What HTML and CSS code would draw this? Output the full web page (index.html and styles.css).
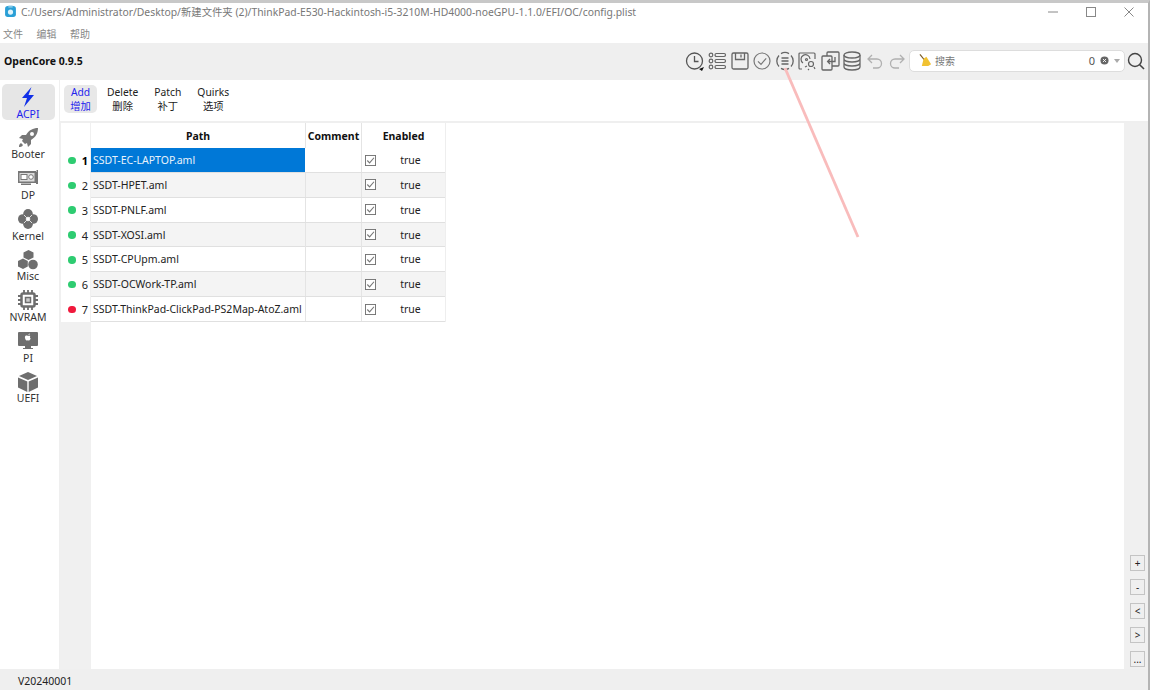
FILE: index.html
```html
<!DOCTYPE html>
<html lang="zh">
<head>
<meta charset="utf-8">
<title>OpenCore Configurator</title>
<link rel="stylesheet" href="styles.css">
</head>
<body>
<svg class="defs" width="0" height="0" aria-hidden="true">
  <symbol id="check" viewBox="0 0 12 12">
    <rect x="0.5" y="0.5" width="11" height="11" fill="#fff" stroke="#707070"/>
    <path d="M2.5 6l2.5 2.6L9.8 3" fill="none" stroke="#777" stroke-width="1.2"/>
  </symbol>
</svg>
<div class="window">
  <header class="titlebar">
    <svg class="appicon" viewBox="0 0 12 12"><rect x="1" y="1" width="10" height="10" rx="2.5" fill="#2a9fd6"/><circle cx="6" cy="6.5" r="2.4" fill="#dff3fb"/><rect x="4" y="0.5" width="4" height="2" fill="#7fc7e6"/></svg>
    <span class="path">C:/Users/Administrator/Desktop/新建文件夹 (2)/ThinkPad-E530-Hackintosh-i5-3210M-HD4000-noeGPU-1.1.0/EFI/OC/config.plist</span>
    <div class="winctl">
      <svg viewBox="0 0 12 12"><path d="M1 6h10" stroke="#888" fill="none"/></svg>
      <svg viewBox="0 0 12 12"><rect x="1.5" y="1.5" width="9" height="9" stroke="#888" fill="none"/></svg>
      <svg viewBox="0 0 12 12"><path d="M1.5 1.5l9 9M10.5 1.5l-9 9" stroke="#888" fill="none"/></svg>
    </div>
  </header>
  <nav class="menubar"><span>文件</span><span>编辑</span><span>帮助</span></nav>
  <div class="toolbar">
    <strong class="brand">OpenCore 0.9.5</strong>
    <div class="tools">
      <svg viewBox="0 0 20 20"><circle cx="9.5" cy="10" r="8" fill="none" stroke="#555" stroke-width="1.3"/><path d="M9.5 5v5.5h4" fill="none" stroke="#555" stroke-width="1.3"/><path d="M14 18l5-2-2 4z" fill="#111"/></svg>
      <svg viewBox="0 0 20 20"><g fill="none" stroke="#666" stroke-width="1.2"><circle cx="4" cy="4" r="1.8"/><circle cx="4" cy="10" r="1.8"/><circle cx="4" cy="16" r="1.8"/><rect x="8" y="2.5" width="10.5" height="3" rx="1.4"/><rect x="8" y="8.5" width="10.5" height="3" rx="1.4"/><rect x="8" y="14.5" width="10.5" height="3" rx="1.4"/></g></svg>
      <svg viewBox="0 0 20 20"><g fill="none" stroke="#666" stroke-width="1.3"><rect x="2" y="2" width="16" height="16" rx="1.5"/><path d="M5.5 2v6.5h9V2"/><path d="M11 3.5v3"/></g></svg>
      <svg viewBox="0 0 20 20"><g fill="none" stroke="#777" stroke-width="1.2"><circle cx="10" cy="10" r="8"/><path d="M6 10.3l3 3 5.2-6"/></g></svg>
      <svg viewBox="0 0 20 20"><g fill="none" stroke="#666" stroke-width="1.3"><path d="M4 4.5A8 8 0 0 0 4 15.5M16 4.5A8 8 0 0 1 16 15.5M6 2.6A8 8 0 0 1 14 2.6M6 17.4A8 8 0 0 0 14 17.4"/><path d="M6.5 7h7M6.5 10h7M6.5 13h7"/></g></svg>
      <svg viewBox="0 0 20 20"><g fill="none" stroke="#666" stroke-width="1.2"><path d="M5 18H3a1 1 0 0 1-1-1V3a1 1 0 0 1 1-1h14a1 1 0 0 1 1 1v5"/><path d="M6 12a4.5 4.5 0 1 1 7-4"/><circle cx="9.5" cy="8.5" r="1"/><circle cx="14" cy="13" r="2.5"/><path d="M8 16l2-1M17 16l1 2M12 18l-1 1"/></g></svg>
      <svg viewBox="0 0 20 20"><g fill="none" stroke="#666" stroke-width="1.3"><rect x="2" y="5" width="10" height="14" rx="1"/><path d="M7 5V2a1 1 0 0 1 1-1h10a1 1 0 0 1 1 1v12a1 1 0 0 1-1 1h-6"/><path d="M15 6v4.500H8M10 8l-2.400 2.500 2.400 2.500"/></g></svg>
      <svg viewBox="0 0 20 20"><g fill="none" stroke="#666" stroke-width="1.3"><ellipse cx="10" cy="4" rx="8" ry="3"/><path d="M2 4v12c0 1.700 3.600 3 8 3s8-1.300 8-3V4M2 8c0 1.700 3.600 3 8 3s8-1.300 8-3M2 12c0 1.700 3.600 3 8 3s8-1.300 8-3"/></g></svg>
      <svg viewBox="0 0 20 20"><path d="M7 4L3 8l4 4M3 8h9a4.500 4.500 0 0 1 0 9H8" fill="none" stroke="#b0b0b0" stroke-width="1.300"/></svg>
      <svg viewBox="0 0 20 20"><path d="M13 4l4 4-4 4M17 8H8a4.500 4.500 0 0 0 0 9h4" fill="none" stroke="#b0b0b0" stroke-width="1.300"/></svg>
    </div>
    <div class="search">
      <svg class="broom" viewBox="0 0 14 14"><path d="M1 0.500l5 6" stroke="#7a5a20" stroke-width="1.200"/><path d="M5 5l3-2 5 8-3 2-7 0z" fill="#f1c232"/></svg>
      <span class="search-label">搜索</span>
      <span class="count">0</span>
      <svg class="clear" viewBox="0 0 10 10"><circle cx="5" cy="5" r="4.500" fill="#666"/><path d="M3.300 3.300l3.400 3.400M6.700 3.300L3.300 6.700" stroke="#fff"/></svg>
      <span class="caret"></span>
    </div>
    <svg class="magnifier" viewBox="0 0 18 18"><circle cx="8" cy="8" r="6.500" fill="none" stroke="#444" stroke-width="1.400"/><path d="M12.700 12.700L17 17" stroke="#444" stroke-width="1.600"/></svg>
  </div>
  <div class="main">
    <aside class="sidebar">
      <a class="nav active"><svg viewBox="0 0 20 20"><path d="M13.500 0L4 11h5l-3 9 10-12h-5.500z" fill="#1130e8"/></svg><span>ACPI</span></a>
      <a class="nav"><svg viewBox="0 0 20 20"><path d="M20 0c-5 0-9 2-12 7H4L1 10l4 1-1 2 3 3 2-1 1 4 3-3v-4c5-3 7-7 7-12zM14 4a2 2 0 1 1 0 4 2 2 0 0 1 0-4zM3 15c-2 1-2 3-2 4 1 0 3 0 4-2z" fill="#777"/></svg><span>Booter</span></a>
      <a class="nav"><svg viewBox="0 0 20 20"><path d="M0 3h18v1h.5V2H20v14h-2v-1H0z" fill="#777"/><rect x="1.500" y="5" width="15" height="8.500" fill="#ddd"/><rect x="3" y="6.500" width="6" height="5" fill="#fff" stroke="#777"/><circle cx="13" cy="9" r="2.300" fill="#fff" stroke="#777"/><path d="M3 15.500h10V17H3z" fill="#777"/></svg><span>DP</span></a>
      <a class="nav"><svg viewBox="0 0 20 20"><g fill="#6e6e6e"><circle cx="10" cy="4.800" r="4.800"/><circle cx="10" cy="15.200" r="4.800"/><circle cx="4.800" cy="10" r="4.800"/><circle cx="15.200" cy="10" r="4.800"/></g><path d="M10 7.500l2.500 2.500-2.500 2.500L7.500 10z" fill="#fff"/><path d="M6 6l8 8M14 6l-8 8" stroke="#fff" stroke-width=".8"/></svg><span>Kernel</span></a>
      <a class="nav"><svg viewBox="0 0 20 20"><g fill="#6e6e6e"><path d="M10.500 0l5 2.500v5l-5 2.500-5-2.500v-5z"/><path d="M5 8.500l4.800 2.500v5.500L5 19l-5-2.500V11z"/><circle cx="15" cy="14.500" r="4.800"/></g></svg><span>Misc</span></a>
      <a class="nav"><svg viewBox="0 0 20 20"><g fill="none" stroke="#6e6e6e"><rect x="3.500" y="3.500" width="13" height="13" rx="1.500" stroke-width="2.500"/><rect x="7.500" y="7.500" width="5" height="5" fill="#ccc" stroke-width="1.500"/><path d="M6 0v3M10 0v3M14 0v3M6 17v3M10 17v3M14 17v3M0 6h3M0 10h3M0 14h3M17 6h3M17 10h3M17 14h3" stroke-width="1.800"/></g></svg><span>NVRAM</span></a>
      <a class="nav"><svg viewBox="0 0 20 20"><path d="M1 1h18a1 1 0 0 1 1 1v12a1 1 0 0 1-1 1h-6v2h2v1H5v-1h2v-2H1a1 1 0 0 1-1-1V2a1 1 0 0 1 1-1z" fill="#6e6e6e"/><path d="M10.500 4c0-1 .6-1.500 1.400-1.600 0 .9-.6 1.500-1.400 1.600zM10 5c1-.4 1.500-.4 2.400.1-.6.500-.6 2 .3 2.500-.4 1-1 1.900-1.600 1.900-.5 0-.7-.3-1.200-.3s-.8.300-1.200.3c-.8 0-1.800-1.800-1.800-3.200 0-2 1.900-2 3.100-1.300z" fill="#fff"/></svg><span>PI</span></a>
      <a class="nav"><svg viewBox="0 0 20 20"><g fill="#6e6e6e"><path d="M10 0l9 4-9 4-9-4z"/><path d="M0 5.500l9.300 4V20L0 15.500z"/><path d="M20 5.500l-9.300 4V20l9.300-4.500z"/></g></svg><span>UEFI</span></a>
    </aside>
    <section class="content">
      <div class="tabs">
        <a class="tab active"><span>Add</span><span>增加</span></a>
        <a class="tab"><span>Delete</span><span>删除</span></a>
        <a class="tab"><span>Patch</span><span>补丁</span></a>
        <a class="tab"><span>Quirks</span><span>选项</span></a>
      </div>
      <div class="work">
        <div class="gutter">
          <div class="gutter-cells">
            <div class="num head"></div>
            <div class="num"><i class="dot"></i><b>1</b></div>
            <div class="num"><i class="dot"></i><span>2</span></div>
            <div class="num"><i class="dot"></i><span>3</span></div>
            <div class="num"><i class="dot"></i><span>4</span></div>
            <div class="num"><i class="dot"></i><span>5</span></div>
            <div class="num"><i class="dot"></i><span>6</span></div>
            <div class="num"><i class="dot red"></i><span>7</span></div>
          </div>
        </div>
        <div class="sheet">
          <div class="table">
            <div class="row head"><div>Path</div><div>Comment</div><div>Enabled</div></div>
            <div class="row"><div class="cell-path selected">SSDT-EC-LAPTOP.aml</div><div></div><div class="cell-flag"><svg><use href="#check"/></svg><span>true</span></div></div>
            <div class="row alt"><div class="cell-path">SSDT-HPET.aml</div><div></div><div class="cell-flag"><svg><use href="#check"/></svg><span>true</span></div></div>
            <div class="row"><div class="cell-path">SSDT-PNLF.aml</div><div></div><div class="cell-flag"><svg><use href="#check"/></svg><span>true</span></div></div>
            <div class="row alt"><div class="cell-path">SSDT-XOSI.aml</div><div></div><div class="cell-flag"><svg><use href="#check"/></svg><span>true</span></div></div>
            <div class="row"><div class="cell-path">SSDT-CPUpm.aml</div><div></div><div class="cell-flag"><svg><use href="#check"/></svg><span>true</span></div></div>
            <div class="row alt"><div class="cell-path">SSDT-OCWork-TP.aml</div><div></div><div class="cell-flag"><svg><use href="#check"/></svg><span>true</span></div></div>
            <div class="row"><div class="cell-path">SSDT-ThinkPad-ClickPad-PS2Map-AtoZ.aml</div><div></div><div class="cell-flag"><svg><use href="#check"/></svg><span>true</span></div></div>
          </div>
        </div>
        <div class="rowbtns">
          <button>+</button><button>-</button><button>&lt;</button><button>&gt;</button><button>...</button>
        </div>
      </div>
    </section>
  </div>
  <footer class="statusbar">V20240001</footer>
</div>
<svg class="annotation" viewBox="0 0 80 175" aria-hidden="true"><path d="M1 1L74 170" stroke="#f9bcbc" stroke-width="2.800" fill="none"/></svg>
</body>
</html>
```
FILE: styles.css
```css
* { box-sizing: border-box; }
html, body { margin: 0; height: 690px; overflow: hidden; background: #fff; }
body {
  font-family: "Noto Sans", "Noto Sans CJK SC", sans-serif;
  font-size: 11px;
  color: #222;
  position: relative;
}
.defs { position: absolute; }
.window {
  width: 1150px;
  height: 690px;
  display: flex;
  flex-direction: column;
  border-top: 3px solid #c8c8c8;
  border-right: 2px solid #b4b4b4;
}
.titlebar {
  height: 21px;
  display: flex;
  align-items: center;
  padding: 0 0 4px 4px;
  flex: none;
}
.appicon { width: 13px; height: 13px; margin-right: 4px; }
.path { color: #777; font-size: 10.360px; white-space: nowrap; }
.winctl { margin-left: auto; display: flex; gap: 26px; padding-right: 13px; }
.winctl svg { width: 12px; height: 12px; }
.menubar {
  height: 19px;
  display: flex;
  align-items: center;
  gap: 13.500px;
  padding-left: 3px;
  color: #888;
  font-size: 10px;
  flex: none;
}
.toolbar {
  height: 37px;
  background: #efefef;
  display: flex;
  align-items: center;
  padding: 0 0 2px 4px;
  flex: none;
}
.brand { font-size: 10.500px; color: #111; font-weight: 700; }
.tools { margin-left: auto; display: flex; gap: 2.500px; }
.tools svg { width: 20px; height: 20px; display: block; }
.search {
  width: 216px;
  height: 22px;
  margin-left: 2px;
  background: #fff;
  border: 1px solid #ddd;
  border-radius: 5px;
  display: flex;
  align-items: center;
  padding: 0 4px 0 9px;
}
.broom { width: 13px; height: 13px; }
.search-label { margin-left: 3px; color: #777; font-size: 10px; }
.count { margin-left: auto; color: #555; }
.clear { width: 9px; height: 9px; margin-left: 5px; }
.caret {
  margin-left: 5px;
  width: 0;
  height: 0;
  border: 3px solid transparent;
  border-top: 4px solid #aaa;
  border-bottom: 0;
}
.magnifier { width: 18px; height: 18px; margin: 0 3px 0 2px; }
.main { flex: 1; min-height: 0; display: flex; }
.sidebar {
  width: 60px;
  border-right: 1px solid #efefef;
  padding: 4px 2px 0 1.500px;
  display: flex;
  flex-direction: column;
  flex: none;
}
.nav {
  width: 53px;
  height: 40.700px;
  display: flex;
  flex-direction: column;
  align-items: center;
  padding-top: 3px;
  border-radius: 5px;
  color: #333;
  font-size: 10.500px;
  line-height: 13px;
  flex: none;
}
.nav svg { width: 20px; height: 20px; margin-bottom: 0.500px; flex: none; }
.nav.active { height: 36px; margin-bottom: 4.700px; background: #e6e6e6; color: #2222ee; }
.content { flex: 1; min-width: 0; display: flex; flex-direction: column; }
.tabs {
  height: 43px;
  border-bottom: 2px solid #efefef;
  display: flex;
  align-items: flex-start;
  padding: 5px 0 0 4px;
  gap: 4px;
  flex: none;
}
.tab {
  display: flex;
  flex-direction: column;
  align-items: center;
  padding: 0 6px;
  height: 28px;
  min-width: 33px;
  border-radius: 5px;
  line-height: 14px;
  font-size: 10.300px;
  color: #222;
}
.tab.active { background: #e8e8e8; color: #2222ee; }
.work { flex: 1; min-height: 0; display: flex; }
.gutter { width: 31px; background: #f0f0f0; padding-left: 1px; flex: none; }
.gutter-cells { width: 29px; background: #fff; height: 199px; }
.num {
  height: 24.860px;
  display: flex;
  align-items: center;
  justify-content: space-between;
  padding: 0 2px 0 7px;
  font-size: 11px;
}
.num.head { height: 25px; }
.num b { color: #000; }
.dot { width: 7.500px; height: 7.500px; border-radius: 50%; background: #2ecc71; }
.dot.red { background: #f0193c; }
.sheet { flex: 1; min-width: 0; background: #fff; }
.table { width: 355px; border-right: 1px solid #eee; }
.row {
  display: grid;
  grid-template-columns: 215px 56px 83px;
  height: 24.860px;
  border-bottom: 1px solid #e0e0e0;
}
.row.head { height: 25px; border-bottom: 0; font-weight: 700; color: #111; font-size: 10.500px; text-align: center; line-height: 27px; }
.row.alt { background: #f4f4f4; }
.row > div { border-right: 1px solid #e4e4e4; min-width: 0; }
.row > div:last-child { border-right: 0; }
.cell-path { padding-left: 2px; line-height: 24px; font-size: 10.500px; white-space: nowrap; }
.cell-path.selected { background: #0078d7; color: #e8f2fb; border-right: 1px solid #fff; }
.cell-flag { display: flex; align-items: center; padding-left: 3px; }
.cell-flag svg { width: 11px; height: 11px; }
.cell-flag span { flex: 1; text-align: center; font-size: 10.500px; }
.rowbtns {
  width: 24px;
  background: #f0f0f0;
  display: flex;
  flex-direction: column;
  justify-content: flex-end;
  align-items: flex-start;
  gap: 8px;
  padding: 0 0 2px 6px;
  flex: none;
}
.rowbtns button {
  width: 15px;
  height: 16px;
  padding: 0;
  border: 1px solid #c4c4c4;
  background: #efefef;
  font: 10px/12px "Noto Sans", sans-serif;
  color: #222;
}
.statusbar {
  height: 21px;
  background: #efefef;
  padding-left: 18px;
  line-height: 24px;
  flex: none;
  font-size: 10.500px;
}
.annotation {
  position: absolute;
  left: 784px;
  top: 67px;
  width: 80px;
  height: 175px;
}
```
